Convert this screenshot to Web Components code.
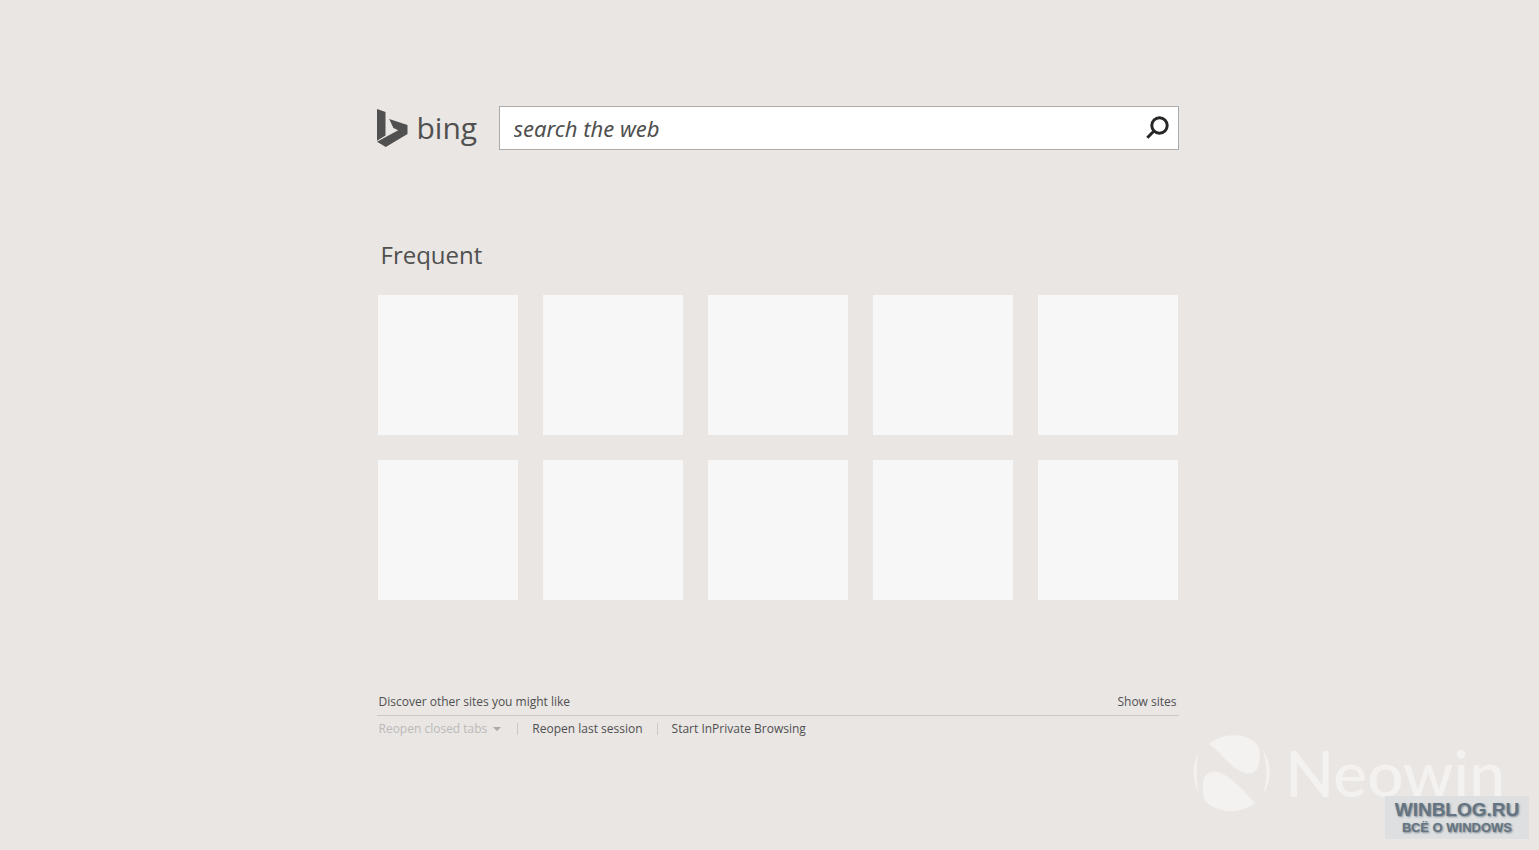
<!DOCTYPE html>
<html lang="en">
<head>
<meta charset="utf-8">
<title>New tab</title>
<style>
  html { height: 100%; }
  body {
    margin: 0;
    min-height: 100%;
    position: relative;
    background: #e9e6e4;
    color: #505050;
    font-family: "Open Sans", "Noto Sans", sans-serif;
    font-size: 12px;
    line-height: 16px;
  }
</style>
</head>
<body>
<new-tab-page>
  <search-header slot="search"></search-header>
  <frequent-sites slot="sites" heading="Frequent" count="10"></frequent-sites>
  <page-footer slot="footer"></page-footer>
</new-tab-page>
<neowin-mark></neowin-mark>
<source-badge><span slot="name">WINBLOG.RU</span><span slot="tagline">ВСЁ О WINDOWS</span></source-badge>

<script>
  class ShadowElement extends HTMLElement {
    constructor() {
      super();
      this.attachShadow({ mode: "open" }).innerHTML = this.constructor.markup;
    }
  }

  customElements.define("new-tab-page", class extends ShadowElement {
    static markup = `
      <style>
        :host { display: block; padding: 106px 0 0 16px; }
        main { max-width: 802px; margin: 0 auto; display: flex; flex-direction: column; }
        slot[name="sites"] { display: block; margin-top: 88px; }
        slot[name="footer"] { display: block; margin-top: 92px; }
      </style>
      <main>
        <slot name="search"></slot>
        <slot name="sites"></slot>
        <slot name="footer"></slot>
      </main>`;
  });

  customElements.define("bing-logo", class extends ShadowElement {
    static markup = `
      <style>
        :host { display: block; }
        a { display: flex; align-items: center; gap: 9px; color: #505050; text-decoration: none; }
        svg { display: block; width: 31px; height: 39px; }
        span { font: 30px/44px "Open Sans", "Noto Sans", sans-serif; }
      </style>
      <a href="#bing">
        <svg viewBox="0 0 31 39" aria-hidden="true">
          <path fill="#505050" d="M0 0 8.500 3V26.500L0 31.800Z"/>
          <path fill="#505050" d="M12.200 10 30.500 16V25L8.800 38 0 32.800 21.200 21.300 16.400 19Z"/>
        </svg>
        <span>bing</span>
      </a>`;
  });

  customElements.define("search-header", class extends ShadowElement {
    static markup = `
      <style>
        :host { display: block; }
        header { display: flex; align-items: center; }
        bing-logo { flex: 0 0 122px; }
        form {
          flex: 1; min-width: 0; height: 44px; box-sizing: border-box;
          display: flex; background: #fff; border: 1px solid #ababab;
        }
        input {
          flex: 1; min-width: 0; border: 0; outline: 0; margin: 0; padding: 0 14px;
          background: none; color: #505050;
          font: italic 22px/30px "Noto Sans", "Open Sans", sans-serif;
        }
        input::placeholder { color: #505050; opacity: 1; }
        button {
          flex: 0 0 42px; display: flex; align-items: center; justify-content: center;
          margin: 0; padding: 0; border: 0; background: none;
        }
        svg { display: block; width: 24px; height: 24px; }
      </style>
      <header>
        <bing-logo></bing-logo>
        <form role="search">
          <input type="text" aria-label="search the web" placeholder="search the web">
          <button type="button" aria-label="Search">
            <svg viewBox="0 0 24 24" fill="none" stroke="#262626" stroke-width="3">
              <circle cx="14.500" cy="9.500" r="7.700"/>
              <path d="M9.500 14.500 2.300 21.800"/>
            </svg>
          </button>
        </form>
      </header>`;
  });

  customElements.define("site-tile", class extends ShadowElement {
    static markup = `
      <style>
        :host { display: block; aspect-ratio: 1; background: #f7f7f7; }
      </style>
      <slot></slot>`;
  });

  customElements.define("frequent-sites", class extends ShadowElement {
    static markup = `
      <style>
        :host { display: block; }
        h1 { margin: 0 0 24px 4px; font-size: 24px; line-height: 33px; font-weight: 400; }
        div { display: grid; grid-template-columns: repeat(5, 1fr); gap: 25px; padding: 0 1px; }
      </style>
      <h1></h1>
      <div></div>`;
    connectedCallback() {
      this.shadowRoot.querySelector("h1").textContent = this.getAttribute("heading");
      const grid = this.shadowRoot.querySelector("div");
      grid.replaceChildren(...Array.from({ length: Number(this.getAttribute("count")) },
        () => document.createElement("site-tile")));
    }
  });

  customElements.define("page-footer", class extends ShadowElement {
    static markup = `
      <style>
        :host { display: block; }
        .row { display: flex; padding: 2px; }
        .discover { justify-content: space-between; padding-bottom: 5px; border-bottom: 1px solid #cbc8c6; }
        .actions { padding-top: 5px; align-items: center; gap: 14px; }
        a { color: inherit; text-decoration: none; }
        button {
          display: flex; align-items: center; gap: 6px; margin: 0 2px 0 0; padding: 0; border: 0;
          background: none; color: #bcbab8; font: inherit;
        }
        svg { display: block; width: 8px; height: 4px; }
        i { width: 1px; height: 12px; background: #cbc8c6; }
      </style>
      <footer>
        <div class="row discover"><span>Discover other sites you might like</span><a href="#sites">Show sites</a></div>
        <div class="row actions">
          <button type="button" disabled>Reopen closed tabs
            <svg viewBox="0 0 8 4" aria-hidden="true"><path fill="#aaa8a6" d="M0 0H8L4 4Z"/></svg>
          </button>
          <i></i>
          <a href="#session">Reopen last session</a>
          <i></i>
          <a href="#inprivate">Start InPrivate Browsing</a>
        </div>
      </footer>`;
  });

  customElements.define("neowin-mark", class extends ShadowElement {
    static markup = `
      <style>
        :host {
          position: absolute; right: 34px; bottom: 38px;
          display: flex; align-items: center; gap: 14px; color: #f4f2f0;
        }
        svg { display: block; width: 78px; height: 78px; }
        span { font: 500 64px/76px Lato, sans-serif; }
      </style>
      <svg viewBox="0 0 78 78" fill="currentColor" aria-hidden="true">
        <path d="M16 10C29-1 50-2 63 9 68 13 67 23 66 30 64 37 60 41 52 39 44 37 37 30 30 23 25 18 21 13 16 10Z"/>
        <path d="M62 69C48 80 26 80 13 68 9 64 10 53 10 49 11 41 17 36 25 38 37 41 50 56 62 69Z"/>
        <path d="M5 20C-1 31-1 47 6 59 3 47 3 34 5 20Z"/>
        <path d="M70 16C79 29 79 47 70 60 75 46 74 31 70 16Z"/>
      </svg>
      <span>Neowin</span>`;
  });

  customElements.define("source-badge", class extends ShadowElement {
    static markup = `
      <style>
        :host {
          position: absolute; right: 10px; bottom: 11px; width: 144px; height: 43px;
          display: flex; flex-direction: column; align-items: center; justify-content: center;
          background: #dddfe0; color: #647482; text-shadow: 1px 1px 2px #7d8890;
          font-family: "Liberation Sans", Arial, sans-serif; font-weight: 700;
        }
        .name { font-size: 19px; line-height: 19px; }
        .tagline { font-size: 13px; line-height: 17px; }
      </style>
      <div class="name"><slot name="name"></slot></div>
      <div class="tagline"><slot name="tagline"></slot></div>`;
  });
</script>
</body>
</html>
